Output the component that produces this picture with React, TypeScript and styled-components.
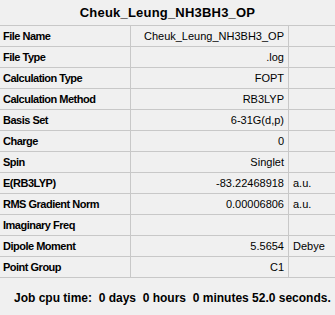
import React from 'react';
import styled, { createGlobalStyle } from 'styled-components';

const GlobalStyle = createGlobalStyle`
  html, body {
    margin: 0;
    padding: 0;
    background: #f0f0f0;
  }

  body {
    font-family: 'Liberation Sans', Arial, sans-serif;
    font-size: 11px;
    color: #000;
  }
`;

const Panel = styled.div`
  width: 335px;
  height: 315px;
  background: #f0f0f0;
  display: flex;
  flex-direction: column;
`;

const Title = styled.div`
  height: 25px;
  display: flex;
  align-items: center;
  justify-content: center;
  padding-bottom: 1px;
  box-sizing: border-box;
  font-weight: bold;
  font-size: 13px;
  letter-spacing: 0.2px;
`;

const Grid = styled.div`
  border-top: 1px solid #c8c8c8;
`;

const Row = styled.div`
  display: grid;
  grid-template-columns: 131px 158px 1fr;
  height: 21px;
  box-sizing: border-box;
  border-bottom: 1px solid #c8c8c8;
`;

const Cell = styled.div<{ $align?: 'left' | 'right'; $bold?: boolean; $last?: boolean }>`
  display: flex;
  align-items: center;
  justify-content: ${(p) => (p.$align === 'right' ? 'flex-end' : 'flex-start')};
  padding: 0 ${(p) => (p.$align === 'right' ? '4px' : '0')} 0 ${(p) => (p.$bold ? '3px' : p.$align === 'right' ? '0' : '4px')};
  border-right: ${(p) => (p.$last ? 'none' : '1px solid #c8c8c8')};
  font-weight: ${(p) => (p.$bold ? 'bold' : 'normal')};
  letter-spacing: ${(p) => (p.$bold ? '-0.5px' : 'normal')};
  white-space: nowrap;
  overflow: hidden;
`;

const Footer = styled.div`
  flex: 1;
  display: flex;
  align-items: center;
  padding-left: 14px;
  padding-top: 2px;
  font-weight: bold;
  font-size: 12px;
  white-space: pre;
`;

interface Prop {
  label: string;
  value?: string;
  unit?: string;
}

const props: Prop[] = [
  { label: 'File Name', value: 'Cheuk_Leung_NH3BH3_OP' },
  { label: 'File Type', value: '.log' },
  { label: 'Calculation Type', value: 'FOPT' },
  { label: 'Calculation Method', value: 'RB3LYP' },
  { label: 'Basis Set', value: '6-31G(d,p)' },
  { label: 'Charge', value: '0' },
  { label: 'Spin', value: 'Singlet' },
  { label: 'E(RB3LYP)', value: '-83.22468918', unit: 'a.u.' },
  { label: 'RMS Gradient Norm', value: '0.00006806', unit: 'a.u.' },
  { label: 'Imaginary Freq' },
  { label: 'Dipole Moment', value: '5.5654', unit: 'Debye' },
  { label: 'Point Group', value: 'C1' },
];

const App = () => (
  <Panel>
    <GlobalStyle />
    <Title>Cheuk_Leung_NH3BH3_OP</Title>
    <Grid>
      {props.map((p) => (
        <Row key={p.label}>
          <Cell $bold>{p.label}</Cell>
          <Cell $align='right'>{p.value}</Cell>
          <Cell $last>{p.unit}</Cell>
        </Row>
      ))}
    </Grid>
    <Footer>{'Job cpu time:  0 days  0 hours  0 minutes 52.0 seconds.'}</Footer>
  </Panel>
);

export default App;
